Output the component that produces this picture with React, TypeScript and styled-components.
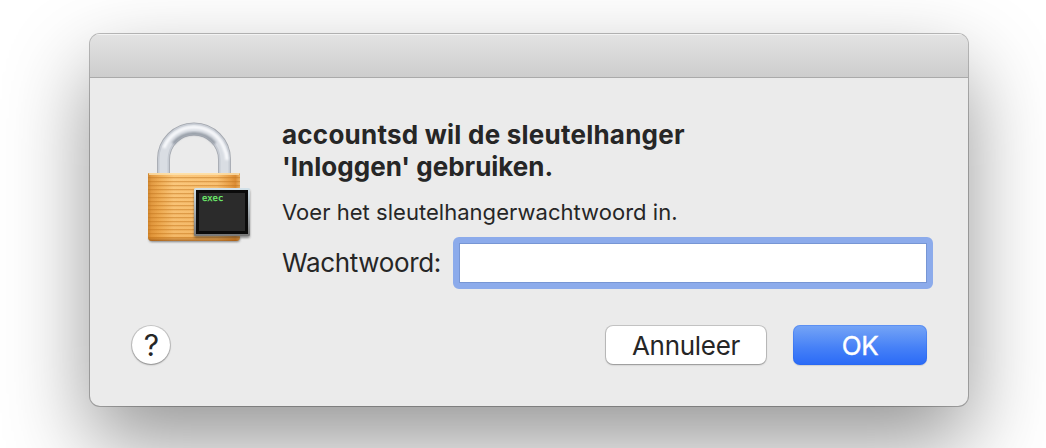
import React from 'react';
import styled, { createGlobalStyle } from 'styled-components';

const GlobalStyle = createGlobalStyle`
  body {
    margin: 0;
    background: #fff;
    overflow: hidden;
    font-family: Inter, 'Liberation Sans', sans-serif;
    color: #262626;
  }

  * {
    box-sizing: border-box;
  }
`;

const Screen = styled.div`
  height: 448px;
  padding: 34px 78px 0 90px;
  overflow: hidden;
`;

const Dialog = styled.div`
  height: 372px;
  border-radius: 10px;
  background: #ebebeb;
  overflow: hidden;
  box-shadow: 0 0 0 1px rgba(0, 0, 0, 0.25), 0 36px 84px rgba(0, 0, 0, 0.42);
`;

const TitleBar = styled.div`
  height: 44px;
  background: linear-gradient(#e3e3e3, #cdcdcd);
  border-bottom: 1px solid #aaa;
  box-shadow: inset 0 1px 0 #f3f3f3;
`;

const Content = styled.div`
  display: flex;
  height: 247px;
  padding: 41px 35px 0 52px;
`;

const LockIcon = styled.svg`
  flex: none;
  width: 116px;
  height: 132px;
  margin-right: 24px;
`;

const Main = styled.div`
  flex: 1;
`;

const Heading = styled.h1`
  margin: 0;
  font-size: 26px;
  font-weight: 700;
  line-height: 32px;
`;

const HeadingLine = styled.span<{ $spacing: number }>`
  display: block;
  letter-spacing: ${(props) => props.$spacing}px;
`;

const Message = styled.p`
  margin: 15px 0 0;
  font-size: 22px;
  line-height: 28px;
  letter-spacing: 0.03px;
`;

const Field = styled.label`
  display: flex;
  align-items: center;
  justify-content: space-between;
  margin-top: 11px;
  font-size: 26px;
  letter-spacing: -0.35px;
`;

const FieldName = styled.span`
  padding-bottom: 2px;
`;

const Input = styled.input`
  width: 480px;
  height: 52px;
  border: 6px solid #8cabeb;
  border-radius: 6px;
  outline: none;
  background: #fff;
  box-shadow: inset 0 0 0 1px #7796d4;
`;

const Footer = styled.div`
  display: flex;
  align-items: center;
  height: 40px;
  padding: 0 41px 0 42px;
`;

const HelpButton = styled.button`
  width: 38px;
  height: 38px;
  margin-right: auto;
  padding: 0 0 0 1px;
  border: 0;
  border-radius: 50%;
  background: #fff;
  box-shadow: 0 0 0 1px rgba(0, 0, 0, 0.15), 0 1px 2px rgba(0, 0, 0, 0.3);
  font: 400 30px/38px Inter, sans-serif;
  color: #262626;
`;

const Button = styled.button<{ $primary?: boolean; $width: number }>`
  width: ${(props) => props.$width}px;
  height: ${(props) => (props.$primary ? 40 : 38)}px;
  margin-left: 27px;
  padding: 1px 0 0;
  border: 0;
  border-radius: 7px;
  font: 26px/38px Inter, sans-serif;
  letter-spacing: -0.3px;
  color: ${(props) => (props.$primary ? '#fff' : '#262626')};
  -webkit-text-stroke: ${(props) => (props.$primary ? '0.4px #fff' : '0')};
  background: ${(props) =>
    props.$primary ? 'linear-gradient(#76a5f6, #4580f7 58%, #2a6af7)' : '#fff'};
  box-shadow: ${(props) =>
    props.$primary
      ? 'inset 0 0 0 1px rgba(35, 100, 235, 0.3), 0 1px 1px rgba(0, 0, 0, 0.12)'
      : '0 0 0 1px rgba(0, 0, 0, 0.16), 0 1px 2px rgba(0, 0, 0, 0.25)'};
`;

const Lock = () => (
  <LockIcon viewBox="142 119 116 132">
    <defs>
      <linearGradient id="brass">
        <stop offset="0" stopColor="#cf862f" />
        <stop offset="0.04" stopColor="#e39c45" />
        <stop offset="0.12" stopColor="#efae57" />
        <stop offset="0.28" stopColor="#fcca80" />
        <stop offset="0.75" stopColor="#fac375" />
        <stop offset="0.9" stopColor="#e79d45" />
        <stop offset="0.95" stopColor="#db8c34" />
        <stop offset="1" stopColor="#eeb568" />
      </linearGradient>
      <linearGradient id="shade" x2="0" y2="1">
        <stop offset="0" stopColor="#d67a10" stopOpacity="0" />
        <stop offset="0.93" stopColor="#d67a10" stopOpacity="0.2" />
        <stop offset="1" stopColor="#8a4608" stopOpacity="0.7" />
      </linearGradient>
      <linearGradient id="frame" x2="0" y2="1">
        <stop offset="0" stopColor="#d3e2ea" />
        <stop offset="0.5" stopColor="#a3abb0" />
        <stop offset="1" stopColor="#777" />
      </linearGradient>
      <pattern id="grooves" width="8" height="4" y="175" patternUnits="userSpaceOnUse">
        <rect y="2" width="8" height="1" fill="#c2761f" opacity="0.5" />
        <rect y="3" width="8" height="1" fill="#c2761f" opacity="0.15" />
      </pattern>
      <filter id="soft" x="-20%" y="-20%" width="140%" height="140%">
        <feGaussianBlur stdDeviation="1.2" />
      </filter>
    </defs>
    <g fill="none">
      <path d="M163.5 174V159.5a30.5 30.5 0 0 1 61 0V174" stroke="#a3a7ae" strokeWidth="13" />
      <path d="M163.5 174V159.5a30.5 30.5 0 0 1 61 0V174" stroke="#c6cbd3" strokeWidth="11.4" />
      <path d="M163.5 174V159.5a30.5 30.5 0 0 1 61 0V174" stroke="#d9dde3" strokeWidth="8" />
      <path d="M164 148a32 32 0 0 1 60 0q3 6 3 12" stroke="#fbfcfe" strokeWidth="3" filter="url(#soft)" />
      <path d="M173 143.5a27 27 0 0 1 42 0" stroke="#9299a3" strokeWidth="3" filter="url(#soft)" />
    </g>
    <rect x="149" y="236" width="91" height="6" rx="3" fill="#555" opacity="0.7" filter="url(#soft)" />
    <path d="M148 174q0-1 1-1h90q1 0 1 1v63q0 4-4 4h-84q-4 0-4-4z" fill="url(#brass)" />
    <path d="M148 174h92v63q0 4-4 4h-84q-4 0-4-4z" fill="url(#grooves)" />
    <path d="M148 174h92v63q0 4-4 4h-84q-4 0-4-4z" fill="url(#shade)" />
    <path d="M149 174h90" stroke="#ffe9b8" strokeWidth="1.3" />
    <rect x="194" y="190" width="56" height="48" rx="2" fill="#333" opacity="0.5" filter="url(#soft)" />
    <rect x="194" y="188" width="56" height="48" rx="1.5" fill="url(#frame)" />
    <rect x="196" y="190" width="52" height="44" fill="#0b0b0b" />
    <rect x="199" y="193" width="46" height="38" fill="#2b2b2b" />
    <text
      x="202"
      y="201"
      fill="#72f470"
      stroke="#72f470"
      strokeWidth="0.25"
      fontFamily="DejaVu Sans Mono, monospace"
      fontSize="8.8"
    >
      exec
    </text>
  </LockIcon>
);

export default () => {
  return (
    <Screen>
      <GlobalStyle />
      <Dialog>
        <TitleBar />
        <Content>
          <Lock />
          <Main>
            <Heading>
              <HeadingLine $spacing={0.23}>accountsd wil de sleutelhanger</HeadingLine>
              <HeadingLine $spacing={0}>'Inloggen' gebruiken.</HeadingLine>
            </Heading>
            <Message>Voer het sleutelhangerwachtwoord in.</Message>
            <Field>
              <FieldName>Wachtwoord:</FieldName>
              <Input type="password" />
            </Field>
          </Main>
        </Content>
        <Footer>
          <HelpButton>?</HelpButton>
          <Button $width={160}>Annuleer</Button>
          <Button $primary $width={134}>
            OK
          </Button>
        </Footer>
      </Dialog>
    </Screen>
  );
};
